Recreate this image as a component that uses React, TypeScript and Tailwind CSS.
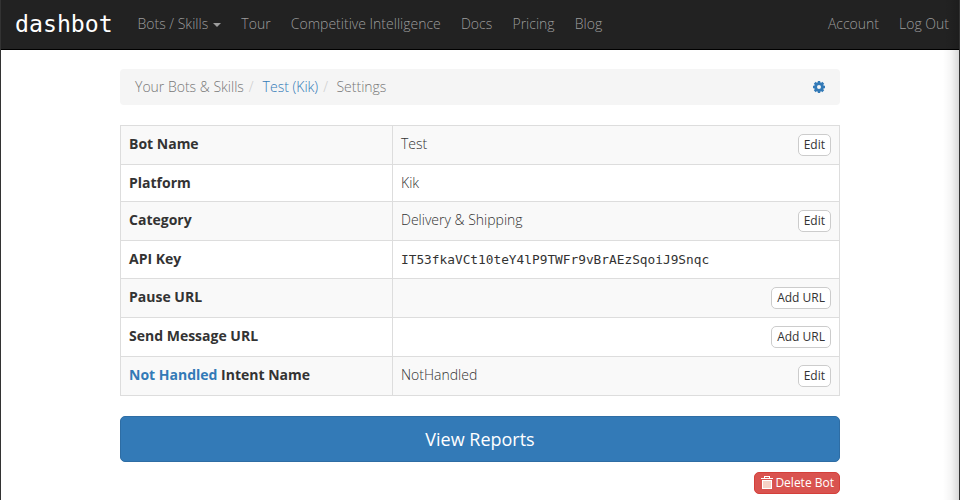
import React from "react";

type Row = {
  label: React.ReactNode;
  value?: string;
  valueClass?: string;
  action?: string;
  height: string;
};

const rows: Row[] = [
  { label: "Bot Name", value: "Test", action: "Edit", height: "h-[39px]" },
  { label: "Platform", value: "Kik", height: "h-[37px]" },
  { label: "Category", value: "Delivery & Shipping", action: "Edit", height: "h-[39px]" },
  {
    label: "API Key",
    value: "IT53fkaVCt10teY4lP9TWFr9vBrAEzSqoiJ9Snqc",
    valueClass: "pt-px font-['DejaVu_Sans_Mono',monospace] text-[12.8px] font-normal",
    height: "h-[38px]",
  },
  { label: "Pause URL", action: "Add URL", height: "h-[39px]" },
  { label: "Send Message URL", action: "Add URL", height: "h-[39px]" },
  {
    label: (
      <>
        <a className="text-[#337ab7]">Not Handled</a> Intent Name
      </>
    ),
    value: "NotHandled",
    action: "Edit",
    height: "h-[39px]",
  },
];

function Navbar() {
  return (
    <nav className="flex h-[50px] items-start border-b border-black bg-[#222] pl-[14px] pr-[10px] pt-[14px] leading-5 text-[#9d9d9d]">
      <a className="w-[98px] whitespace-nowrap font-['DejaVu_Sans_Mono',monospace] text-[23.2px] font-normal leading-5 text-white">
        dashbot
      </a>
      <div className="ml-[24.5px] flex gap-[20.2px]">
        <a className="flex items-center gap-[5px]">
          Bots / Skills
          <span className="mt-[2px] border-x-4 border-t-4 border-x-transparent border-t-[#9d9d9d]" />
        </a>
        <a>Tour</a>
        <a>Competitive Intelligence</a>
        <a>Docs</a>
        <a>Pricing</a>
        <a>Blog</a>
      </div>
      <div className="ml-auto flex gap-5">
        <a>Account</a>
        <a>Log Out</a>
      </div>
    </nav>
  );
}

function GearIcon() {
  return (
    <svg viewBox="0 0 12 12" className="mt-1 h-3 w-3" fill="#337ab7">
      <path
        fillRule="evenodd"
        d="M4.8 0h2.4v1.3l1.1.4 1-.9 1.9 1.9-.9 1 .4 1.1H12v2.4h-1.3l-.4 1.1.9 1-1.9 1.9-1-.9-1.1.4V12H4.8v-1.300l-1.100-.4-1 .9L.8 9.300l.9-1-.4-1.100H0V4.800h1.300l.4-1.100-.9-1L2.700.8l1 .9 1.100-.4zM6 4a2 2 0 1 0 0 4 2 2 0 0 0 0-4z"
      />
    </svg>
  );
}

function TrashIcon() {
  return (
    <svg viewBox="0 0 12 13" className="mb-[2px] h-[13px] w-3 shrink-0" fill="#fff">
      <path d="M3 0h6v2h3v1H0V2h3zM4 1v1h4V1z" fillRule="evenodd" />
      <path d="M1 4h10v9H1z" />
      <path d="M3 5v7M5 5v7M7 5v7M9 5v7" stroke="#e88f72" strokeWidth=".8" />
    </svg>
  );
}

export default function App() {
  return (
    <div className="relative h-[500px] w-[960px] overflow-hidden border-x border-[#333] bg-white font-['Open_Sans',sans-serif] text-sm font-light leading-5 text-[#333]">
      <Navbar />
      <main className="ml-[119px] w-[720px] pt-[19px]">
        <div className="flex h-9 rounded bg-[#f5f5f5] px-[15px] pt-2 text-[#777]">
          <span>Your Bots &amp; Skills</span>
          <span className="px-[5px] text-[#ccc]">/</span>
          <a className="ml-1 text-[#337ab7]">Test (Kik)</a>
          <span className="px-[5px] text-[#ccc]">/</span>
          <span className="ml-[3.5px]">Settings</span>
          <a className="ml-auto">
            <GearIcon />
          </a>
        </div>

        <div className="mt-5 border-x border-t border-[#ddd]">
          {rows.map((row, i) => (
            <div
              key={i}
              className={`flex border-b border-[#ddd] ${row.height} ${i % 2 === 0 ? "bg-[#f9f9f9]" : "bg-white"}`}
            >
              <div className="w-[272px] border-r border-[#ddd] pl-2 pt-2 font-bold">{row.label}</div>
              <div className="flex flex-1 items-start justify-between px-2 pt-2">
                <span className={row.valueClass}>{row.value}</span>
                {row.action && (
                  <button className="h-[22px] rounded-[5px] border border-[#ccc] bg-white px-[5px] text-xs font-normal leading-[18px]">
                    {row.action}
                  </button>
                )}
              </div>
            </div>
          ))}
        </div>

        <button className="mt-5 block h-[46px] w-full rounded-[5px] border border-[#2e6da4] bg-[#337ab7] text-lg font-normal text-white">
          View Reports
        </button>
        <button className="ml-auto mt-[10px] flex h-[22px] w-[86px] items-center justify-end gap-[2.5px] whitespace-nowrap rounded-[5px] border border-[#d43f3a] bg-[#d9534f] pr-[5px] text-xs font-normal leading-[18px] text-white">
          <TrashIcon />
          Delete Bot
        </button>
      </main>
      <div className="pointer-events-none absolute inset-y-0 right-0 w-4 bg-linear-to-r from-transparent via-black/4 to-black/15" />
    </div>
  );
}
